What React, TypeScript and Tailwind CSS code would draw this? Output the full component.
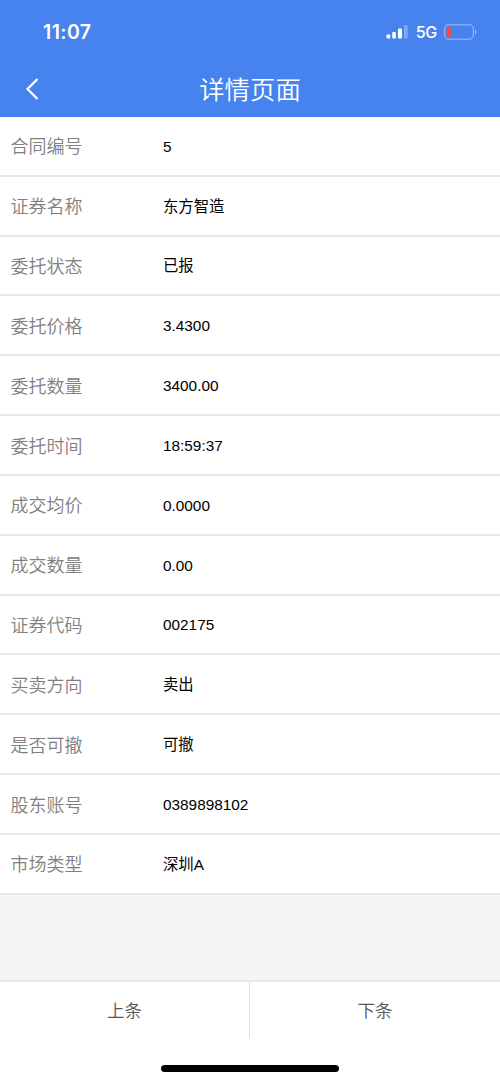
import React from 'react';

interface DetailItem {
  label: string;
  value: string;
}

const details: DetailItem[] = [
  { label: '合同编号', value: '5' },
  { label: '证券名称', value: '东方智造' },
  { label: '委托状态', value: '已报' },
  { label: '委托价格', value: '3.4300' },
  { label: '委托数量', value: '3400.00' },
  { label: '委托时间', value: '18:59:37' },
  { label: '成交均价', value: '0.0000' },
  { label: '成交数量', value: '0.00' },
  { label: '证券代码', value: '002175' },
  { label: '买卖方向', value: '卖出' },
  { label: '是否可撤', value: '可撤' },
  { label: '股东账号', value: '0389898102' },
  { label: '市场类型', value: '深圳A' },
];

const StatusBar: React.FC = () => (
  <div className="flex h-16 items-center justify-between pl-[43px] pr-[22px] text-white">
    <span className="pt-[2px] font-['Inter'] text-[19.5px] font-semibold leading-none tracking-[0.4px]">
      11:07
    </span>
    <div className="flex items-center">
      <svg width="23" height="14" viewBox="0 0 23 14" fill="currentColor">
        <rect x="0.5" y="9.5" width="3.7" height="4" rx="1" />
        <rect x="6.2" y="7" width="3.7" height="6.5" rx="1" />
        <rect x="12" y="3.5" width="4" height="10" rx="1" />
        <rect x="18" y="0" width="3.7" height="13.5" rx="1" opacity="0.3" />
      </svg>
      <span className="ml-[7px] font-['Inter'] text-[16px] font-medium leading-none tracking-[-0.3px]">
        5G
      </span>
      <svg className="ml-[7px]" width="34" height="16" viewBox="0 0 34 16" fill="none">
        <rect x="0.7" y="0.7" width="28.6" height="14.6" rx="4" stroke="white" strokeOpacity="0.35" strokeWidth="1.4" />
        <rect x="2.6" y="2.6" width="4.6" height="10.8" rx="1.8" fill="#e9504f" />
        <path d="M31 5.5c2 .7 2 4.3 0 5z" fill="white" fillOpacity="0.45" />
      </svg>
    </div>
  </div>
);

const Header: React.FC = () => (
  <header className="h-[117px] bg-[#4783ee]">
    <StatusBar />
    <div className="grid h-[50px] grid-cols-[60px_1fr_60px] items-center text-white">
      <button className="pl-[25px]" aria-label="返回">
        <svg width="15" height="22" viewBox="0 0 15 22" fill="none" stroke="currentColor" strokeWidth="2.2">
          <path d="M12.5 1 2.5 11l10 10" />
        </svg>
      </button>
      <h1 className="pt-[3px] text-center text-[25.4px] font-[350] leading-none">详情页面</h1>
    </div>
  </header>
);

const DetailRow: React.FC<{ item: DetailItem }> = ({ item }) => (
  <div className="flex h-[59.83px] items-center border-b-2 border-[#e8e8e8] bg-white pl-[10.5px]">
    <span className="w-[152.5px] pt-[3px] text-[18px] font-[350] leading-none text-[#808080]">{item.label}</span>
    <span className="pt-px text-[15.35px] leading-none text-black">{item.value}</span>
  </div>
);

const App: React.FC = () => {
  return (
    <div
      className="flex h-[1082px] w-[500px] flex-col overflow-hidden bg-[#f5f5f5] font-['Liberation_Sans','Noto_Sans_CJK_SC',sans-serif]"
      lang="zh-CN"
    >
      <Header />
      <main className="flex-1">
        {details.map((item) => (
          <DetailRow key={item.label} item={item} />
        ))}
      </main>
      <footer className="h-[102px] border-t-2 border-[#e8e8e8] bg-white">
        <div className="grid h-14 grid-cols-2 text-[17.5px] font-[350] text-[#555]">
          <button className="border-r border-[#dedede] pt-[2px]">上条</button>
          <button className="pt-[2px]">下条</button>
        </div>
        <div className="mx-auto mt-[27px] h-[7px] w-[178px] rounded-full bg-black" />
      </footer>
    </div>
  );
};

export default App;
